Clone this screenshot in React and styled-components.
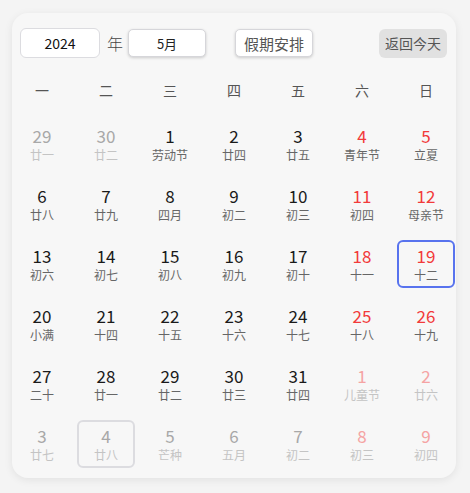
import React from "react";
import styled, { createGlobalStyle } from "styled-components";

const Global = createGlobalStyle`
  html, body { margin: 0; padding: 0; background: #f4f4f4; }
  body { font-family: "Noto Sans CJK SC", "Noto Sans", sans-serif; }
  * { box-sizing: border-box; }
`;

const Page = styled.div`
  padding: 13px 14px 15px 12px;
`;

const Card = styled.div`
  width: 444px;
  background: #f7f7f7;
  border-radius: 16px;
  box-shadow: 0 2px 8px rgba(0, 0, 0, 0.08);
  padding: 15px 1px 10px 1px;
`;

const Toolbar = styled.div`
  display: flex;
  align-items: center;
  height: 30px;
  padding: 0 8px 0 7px;
`;

const YearInput = styled.div`
  width: 80px;
  height: 30px;
  background: #fff;
  border: 1px solid #dcdce0;
  border-radius: 6px;
  display: flex;
  align-items: center;
  justify-content: center;
  font-size: 14px;
  color: #111;
`;

const Label = styled.span`
  font-size: 16px;
  font-weight: 300;
  color: #444;
  margin: 0 5px 0 7px;
`;

const Picker = styled.div`
  width: 78px;
  height: 28px;
  background: #fff;
  border: 1px solid #d6d6da;
  border-radius: 5px;
  box-shadow: 0 1px 3px rgba(0, 0, 0, 0.18);
  display: flex;
  align-items: center;
  justify-content: center;
  font-size: ${(p) => (p.$small ? "13px" : "15px")};
  color: ${(p) => (p.$small ? "#222" : "#555")};
  margin-left: ${(p) => p.$ml || 0}px;
`;

const TodayButton = styled.div`
  margin-left: auto;
  width: 68px;
  height: 29px;
  background: #e1e1e1;
  border-radius: 6px;
  display: flex;
  align-items: center;
  justify-content: center;
  font-size: 14px;
  color: #555;
`;

const WeekHeader = styled.div`
  display: grid;
  grid-template-columns: repeat(7, 58px);
  column-gap: 6px;
  margin-top: 12px;
  height: 40px;
  align-items: center;
`;

const WeekDay = styled.div`
  text-align: center;
  font-size: 14px;
  color: #555;
`;

const Grid = styled.div`
  display: grid;
  grid-template-columns: repeat(7, 58px);
  grid-auto-rows: 48px;
  column-gap: 6px;
  row-gap: 12px;
  margin-top: 10px;
`;

const Cell = styled.div`
  display: flex;
  flex-direction: column;
  align-items: center;
  justify-content: center;
  gap: 1px;
  border-radius: 6px;
  border: 2px solid
    ${(p) => (p.$today ? "#5873ee" : p.$hover ? "#dcdce0" : "transparent")};
`;

const DateNum = styled.div`
  font-size: 17px;
  line-height: 20px;
  color: ${(p) =>
    p.$other
      ? p.$weekend
        ? "#f5a3a3"
        : "#a8a8a8"
      : p.$weekend
      ? "#f23a3a"
      : "#1a1a1a"};
`;

const Lunar = styled.div`
  font-size: 12px;
  line-height: 16px;
  color: ${(p) => (p.$other ? "#c4c4c4" : "#666")};
`;

const weekdays = ["一", "二", "三", "四", "五", "六", "日"];

const rows = [
  [[29, "廿一", 1], [30, "廿二", 1], [1, "劳动节"], [2, "廿四"], [3, "廿五"], [4, "青年节"], [5, "立夏"]],
  [[6, "廿八"], [7, "廿九"], [8, "四月"], [9, "初二"], [10, "初三"], [11, "初四"], [12, "母亲节"]],
  [[13, "初六"], [14, "初七"], [15, "初八"], [16, "初九"], [17, "初十"], [18, "十一"], [19, "十二", 0, "today"]],
  [[20, "小满"], [21, "十四"], [22, "十五"], [23, "十六"], [24, "十七"], [25, "十八"], [26, "十九"]],
  [[27, "二十"], [28, "廿一"], [29, "廿二"], [30, "廿三"], [31, "廿四"], [1, "儿童节", 1], [2, "廿六", 1]],
  [[3, "廿七", 1], [4, "廿八", 1, "hover"], [5, "芒种", 1], [6, "五月", 1], [7, "初二", 1], [8, "初三", 1], [9, "初四", 1]],
];

export default function App() {
  return (
    <Page>
      <Global />
      <Card>
        <Toolbar>
          <YearInput>2024</YearInput>
          <Label>年</Label>
          <Picker $small>5月</Picker>
          <Picker $ml={29}>假期安排</Picker>
          <TodayButton>返回今天</TodayButton>
        </Toolbar>
        <WeekHeader>
          {weekdays.map((w) => (
            <WeekDay key={w}>{w}</WeekDay>
          ))}
        </WeekHeader>
        <Grid>
          {rows.flatMap((row, ri) =>
            row.map(([d, l, other, state], ci) => (
              <Cell
                key={`${ri}-${ci}`}
                $today={state === "today"}
                $hover={state === "hover"}
              >
                <DateNum $other={!!other} $weekend={ci >= 5}>
                  {d}
                </DateNum>
                <Lunar $other={!!other}>{l}</Lunar>
              </Cell>
            ))
          )}
        </Grid>
      </Card>
    </Page>
  );
}
